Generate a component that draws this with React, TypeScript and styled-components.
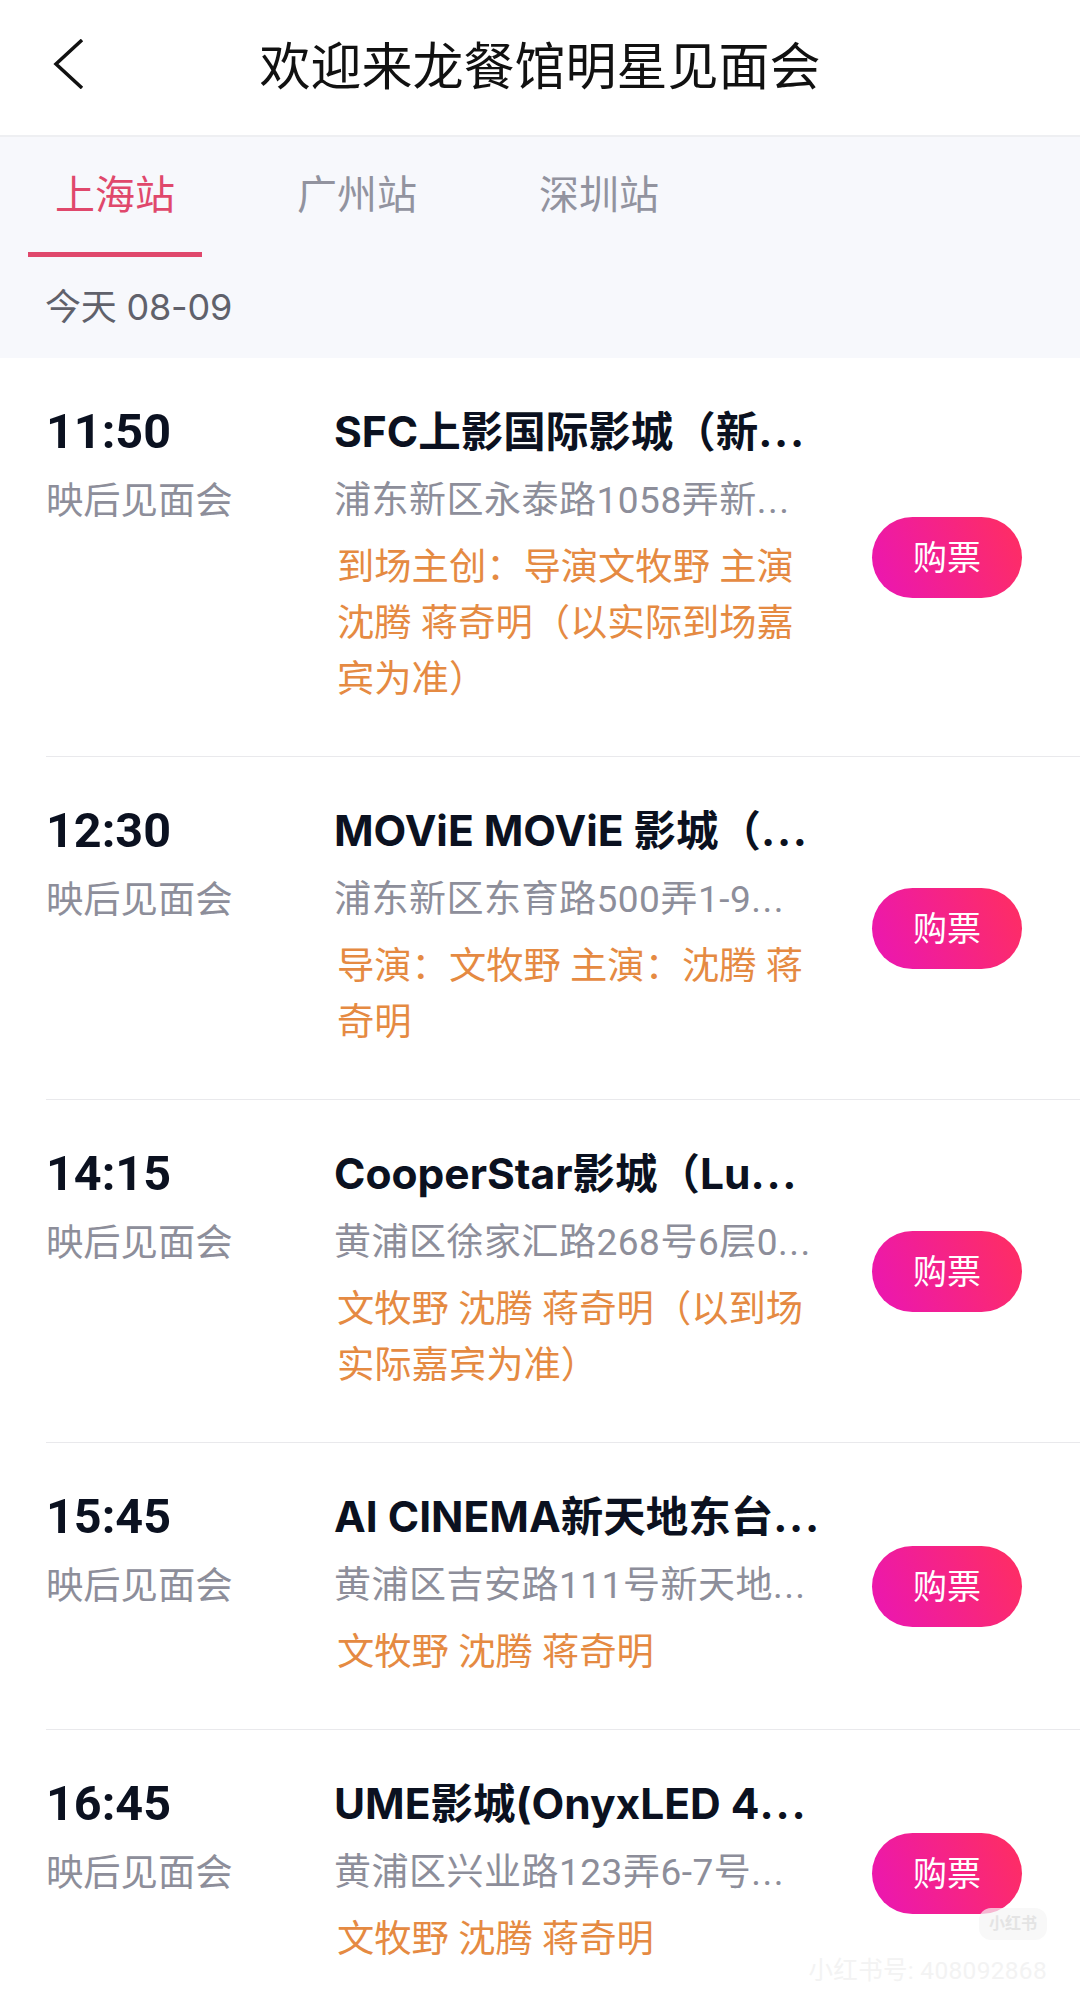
import styled, {createGlobalStyle} from 'styled-components'

type Show = {
    time: string
    name: string
    address: string
    guests: string
}

const shows: Show[] = [
    {
        time: '11:50',
        name: 'SFC上影国际影城（新',
        address: '浦东新区永泰路1058弄新',
        guests: '到场主创：导演文牧野 主演沈腾 蒋奇明（以实际到场嘉宾为准）',
    },
    {
        time: '12:30',
        name: 'MOViE MOViE 影城（',
        address: '浦东新区东育路500弄1-9',
        guests: '导演：文牧野 主演：沈腾 蒋奇明',
    },
    {
        time: '14:15',
        name: 'CooperStar影城（Lu',
        address: '黄浦区徐家汇路268号6层0',
        guests: '文牧野 沈腾 蒋奇明（以到场实际嘉宾为准）',
    },
    {
        time: '15:45',
        name: 'AI CINEMA新天地东台',
        address: '黄浦区吉安路111号新天地',
        guests: '文牧野 沈腾 蒋奇明',
    },
    {
        time: '16:45',
        name: 'UME影城(OnyxLED 4',
        address: '黄浦区兴业路123弄6-7号',
        guests: '文牧野 沈腾 蒋奇明',
    },
]

const tabs = ['上海站', '广州站', '深圳站']

function App() {
    return (
        <>
            <GlobalStyle/>
            <Page>
                <Nav>
                    <BackButton>
                        <svg width="32" height="50" viewBox="0 0 32 50" fill="none">
                            <path d="M29 1 L3 25 L29 49" stroke="#111" strokeWidth="3.5"/>
                        </svg>
                    </BackButton>
                    <Title>欢迎来龙餐馆明星见面会</Title>
                </Nav>
                <Header>
                    <Tabs>
                        {tabs.map((tab, index) => (
                            <Tab key={tab} $active={index === 0}>{tab}</Tab>
                        ))}
                    </Tabs>
                    <DateLine>今天 08-09</DateLine>
                </Header>
                <List>
                    {shows.map((show) => (
                        <Row key={show.time}>
                            <TimeColumn>
                                <Time>{show.time}</Time>
                                <Kind>映后见面会</Kind>
                            </TimeColumn>
                            <Info>
                                <Name>{show.name}<Dots>...</Dots></Name>
                                <Address>{show.address}<Dots>...</Dots></Address>
                                <Guests>{show.guests}</Guests>
                            </Info>
                            <BuyButton>购票</BuyButton>
                        </Row>
                    ))}
                </List>
                <Watermark>
                    <WatermarkLogo>小红书</WatermarkLogo>
                    <WatermarkId>小红书号: 408092868</WatermarkId>
                </Watermark>
            </Page>
        </>
    )
}

const GlobalStyle = createGlobalStyle`
  html, body {
    margin: 0;
    padding: 0;
    background: #fff;
  }

  body {
    font-family: Roboto, "Noto Sans CJK SC", sans-serif;
  }
`

const Page = styled.div`
  position: relative;
  width: 1080px;
  height: 2008px;
  overflow: hidden;
  background: #fff;
`

const Nav = styled.header`
  position: relative;
  display: flex;
  align-items: center;
  justify-content: center;
  height: 135px;
  border-bottom: 2px solid #eeeff2;
  background: #fff;
`

const BackButton = styled.div`
  position: absolute;
  left: 53px;
  top: 39px;
  line-height: 0;
`

const Title = styled.h1`
  margin: 0;
  font-size: 51px;
  font-weight: 400;
  line-height: 64px;
  color: #111;
`

const Header = styled.div`
  height: 221px;
  background: #f7f8fc;
`

const Tabs = styled.div`
  display: flex;
  gap: 68px;
  padding-left: 28px;
`

const Tab = styled.div<{ $active: boolean }>`
  width: 174px;
  height: 120px;
  box-sizing: border-box;
  padding-top: 34px;
  font-size: 40px;
  line-height: 50px;
  text-align: center;
  color: ${(props) => (props.$active ? '#e0486c' : '#92939f')};
  border-bottom: 5px solid ${(props) => (props.$active ? '#e0486c' : 'transparent')};
`

const DateLine = styled.div`
  padding: 28px 0 0 45px;
  font-family: Inter, "Noto Sans CJK SC", sans-serif;
  font-size: 36px;
  line-height: 44px;
  letter-spacing: -0.2px;
  color: #60616b;
`

const List = styled.div`
  background: #fff;
`

const Row = styled.article`
  display: grid;
  grid-template-columns: 289px 537px 150px;
  align-items: center;
  box-sizing: border-box;
  margin-left: 46px;
  padding: 42px 0 49px;
  border-bottom: 1px solid #e9e9ec;
`

const TimeColumn = styled.div`
  align-self: start;
`

const Time = styled.div`
  font-size: 48.5px;
  font-weight: 700;
  line-height: 64px;
  color: #0b1120;
`

const Kind = styled.div`
  font-size: 37.3px;
  line-height: 64px;
  margin-top: 5px;
  color: #8d8e9a;
`

const Info = styled.div`
  align-self: start;
  min-width: 0;
  margin-left: -1px;
`

const Name = styled.div`
  font-family: Inter, "Noto Sans CJK SC", sans-serif;
  font-size: 42.5px;
  font-weight: 700;
  line-height: 64px;
  white-space: nowrap;
  color: #0b1120;
`

const Dots = styled.span`
  letter-spacing: 0.04em;
`

const Address = styled.div`
  font-size: 37px;
  line-height: 64px;
  letter-spacing: 0.5px;
  margin-top: 5px;
  white-space: nowrap;
  color: #8d8e9a;
`

const Guests = styled.div`
  width: 478px;
  margin: 6px 0 0 3px;
  font-size: 37.3px;
  line-height: 56px;
  color: #e58a42;
`

const BuyButton = styled.div`
  display: flex;
  align-items: center;
  justify-content: center;
  box-sizing: border-box;
  width: 150px;
  height: 81px;
  margin-top: 7px;
  padding-bottom: 4px;
  border-radius: 41px;
  background: linear-gradient(65deg, #ec18ac 10%, #fd2c68 90%);
  font-size: 34px;
  color: #fff;
`

const Watermark = styled.div`
  position: absolute;
  right: 33px;
  top: 1908px;
  display: flex;
  flex-direction: column;
  align-items: flex-end;
  gap: 17px;
`

const WatermarkLogo = styled.div`
  padding: 3px 10px;
  border-radius: 12px;
  background: rgba(245, 245, 245, 0.7);
  font-size: 16px;
  font-weight: 700;
  line-height: 26px;
  color: #e4e4e4;
`

const WatermarkId = styled.div`
  font-size: 24.5px;
  line-height: 28px;
  letter-spacing: 0.3px;
  white-space: nowrap;
  color: #f3f3f3;
`

export default App
